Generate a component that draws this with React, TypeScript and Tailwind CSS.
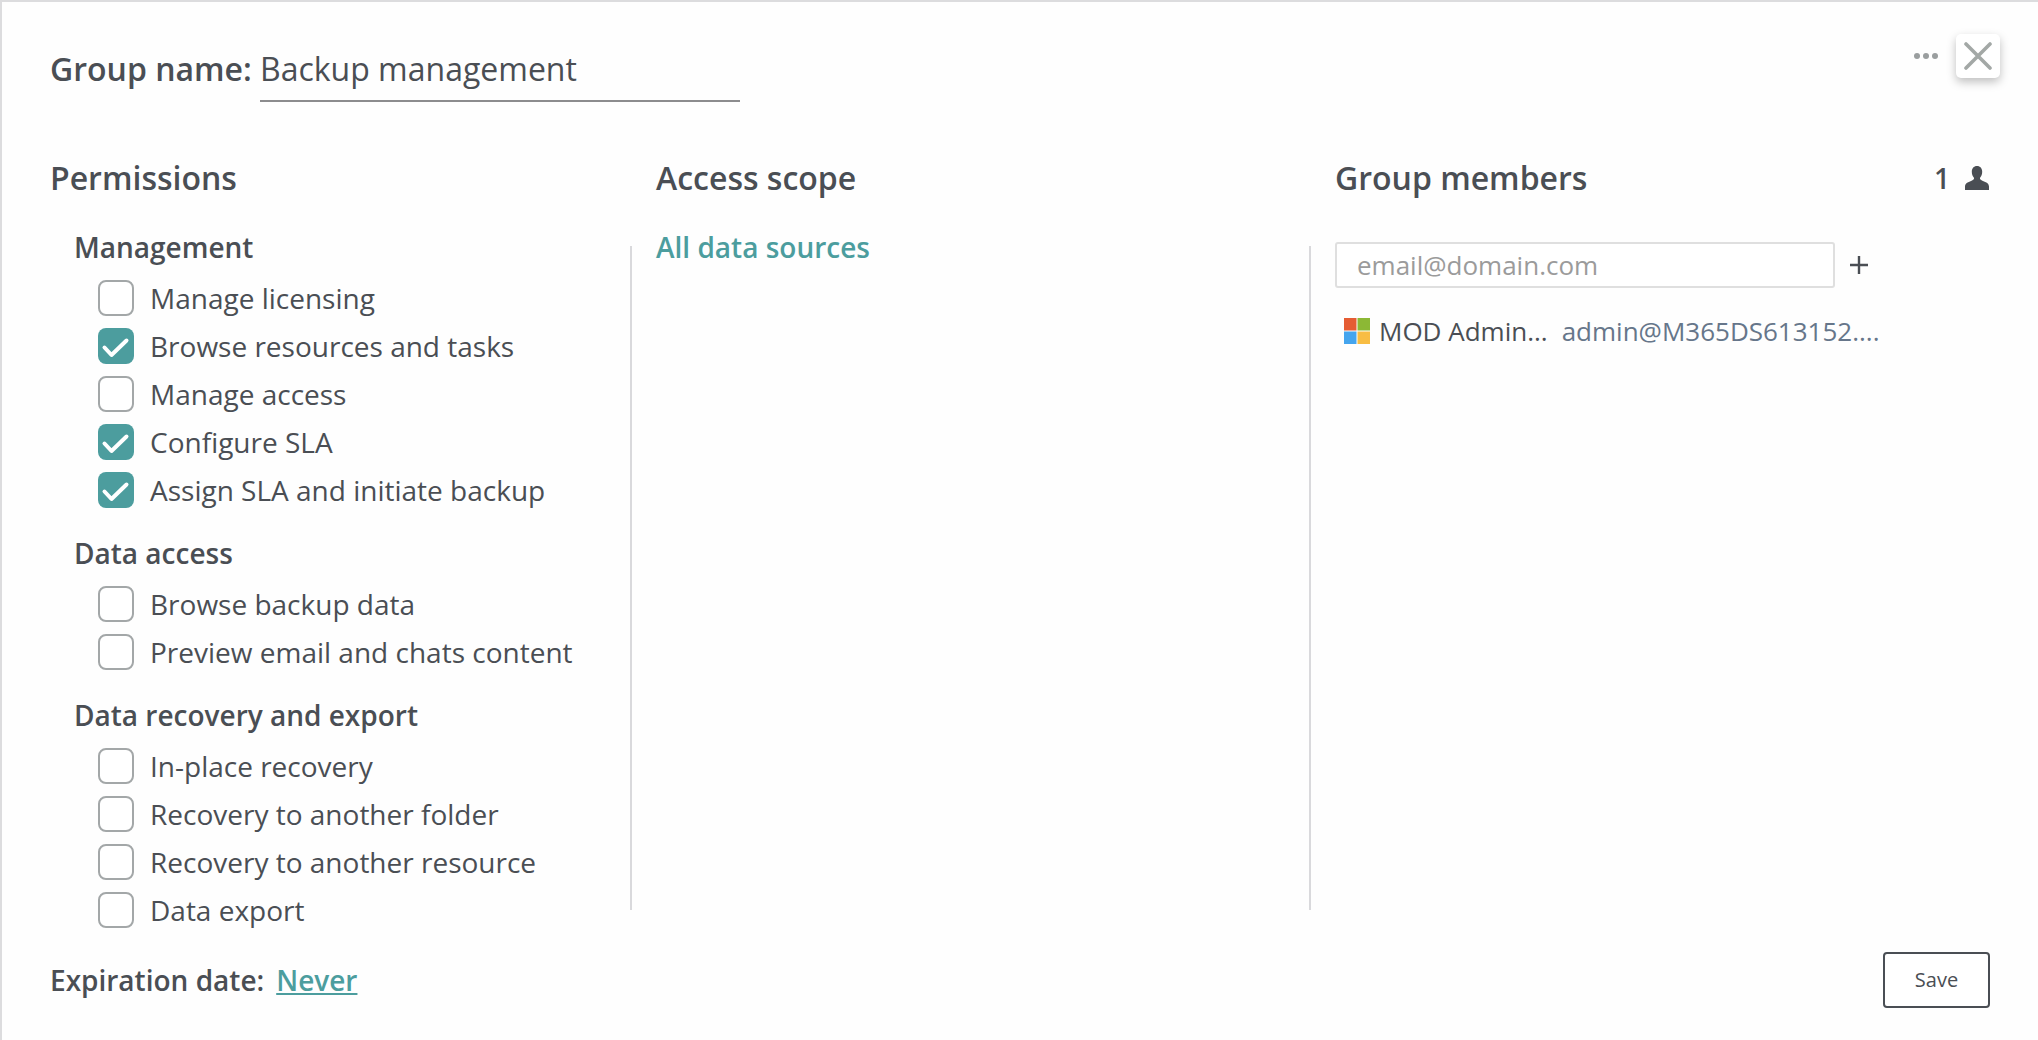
import React from "react";

function Box({ on }: { on?: boolean }) {
  return on ? (
    <span className="flex h-[36px] w-[36px] shrink-0 items-center justify-center rounded-[8px] bg-[#4c9d9e]">
      <svg width="36" height="36" viewBox="0 0 36 36" fill="none">
        <path d="M6.5 19.5 L13.5 27 L28.5 12.5" stroke="#fff" strokeWidth="4" strokeLinecap="round" strokeLinejoin="round" />
      </svg>
    </span>
  ) : (
    <span className="block h-[36px] w-[36px] shrink-0 rounded-[8px] border-2 border-[#a3a7a8] bg-white" />
  );
}

function Row({ label, on }: { label: string; on?: boolean }) {
  return (
    <div className="flex h-[48px] items-center gap-[16px] pl-[24px]">
      <Box on={on} />
      <span className="text-[28px] leading-[48px] text-[#4a4e54]">{label}</span>
    </div>
  );
}

function Group({ title, rows, first }: { title: string; rows: [string, boolean?][]; first?: boolean }) {
  return (
    <div className={first ? "pl-[24px]" : "mt-[22px] pl-[24px]"}>
      <div className="mb-[8px] h-[36px] text-[28px] font-semibold leading-[34px] text-[#4a4e54]">{title}</div>
      {rows.map(([l, o]) => (
        <Row key={l} label={l} on={o} />
      ))}
    </div>
  );
}

export default function App() {
  return (
    <div className="flex h-[1040px] w-[2038px] flex-col overflow-hidden border-l-2 border-t-2 border-[#dcdcde] bg-[#fefefe] font-['Open_Sans',sans-serif] text-[#4a4e54]">
      <header className="flex h-[100px] shrink-0 items-start justify-between pl-[48px] pr-[38px]">
        <div className="mt-[47px] flex h-[53px] items-start">
          <span className="w-[210px] text-[32px] font-semibold leading-[40px]">Group name:</span>
          <span className="h-[53px] w-[480px] border-b-2 border-[#8c8c8e] text-[32px] leading-[40px]">Backup management</span>
        </div>
        <div className="mt-[32px] flex items-center gap-[18px]">
          <svg width="24" height="6" viewBox="0 0 24 6" fill="#9a9e9f">
            <circle cx="3" cy="3" r="3" />
            <circle cx="12" cy="3" r="3" />
            <circle cx="21" cy="3" r="3" />
          </svg>
          <button className="flex h-[44px] w-[44px] items-center justify-center rounded-[5px] bg-white shadow-[0_4px_10px_rgba(0,0,0,0.25)]">
            <svg width="28" height="28" viewBox="0 0 28 28" fill="none">
              <path d="M2 2 L26 26 M26 2 L2 26" stroke="#a3a8a6" strokeWidth="3.6" strokeLinecap="round" />
            </svg>
          </button>
        </div>
      </header>

      <div className="mt-[56px] grid grid-cols-[580px_679px_1fr] pl-[48px] pr-[48px]">
        <h2 className="text-[32px] font-semibold leading-[40px]">Permissions</h2>
        <h2 className="pl-[26px] text-[32px] font-semibold leading-[40px]">Access scope</h2>
        <div className="flex items-center justify-between pl-[26px]">
          <h2 className="text-[32px] font-semibold leading-[40px]">Group members</h2>
          <div className="flex items-center gap-[15px]">
            <span className="text-[28px] font-semibold leading-[40px]">1</span>
            <svg width="24" height="24" viewBox="0 0 24 24" fill="#4a4e54" className="mr-[1px]">
              <path d="M12 0c3.2 0 5.2 2.4 5.2 5.7 0 2.4-.8 4.3-1.8 5.6-.6.8-.6 1.6.1 2.2.8.7 1.9 1.2 3.6 1.9 2.6 1 4.9 2.2 4.9 5.2V24H0v-3.4c0-3 2.3-4.2 4.9-5.2 1.7-.7 2.8-1.2 3.6-1.9.7-.6.7-1.4.1-2.2-1-1.3-1.8-3.2-1.8-5.6C6.8 2.4 8.8 0 12 0z" />
            </svg>
          </div>
        </div>
      </div>

      <div className="mt-[32px] grid h-[704px] shrink-0 grid-cols-[580px_679px_1fr] pl-[48px] pr-[48px]">
        <div>
          <Group
            first
            title="Management"
            rows={[
              ["Manage licensing"],
              ["Browse resources and tasks", true],
              ["Manage access"],
              ["Configure SLA", true],
              ["Assign SLA and initiate backup", true],
            ]}
          />
          <Group title="Data access" rows={[["Browse backup data"], ["Preview email and chats content"]]} />
          <Group
            title="Data recovery and export"
            rows={[["In-place recovery"], ["Recovery to another folder"], ["Recovery to another resource"], ["Data export"]]}
          />
        </div>

        <div className="flex items-start gap-[24px]">
          <div className="mt-[16px] h-[664px] w-[2px] shrink-0 bg-[#d9d9dc]" />
          <a className="h-[36px] text-[28px] font-semibold leading-[34px] text-[#4c9d9e]">All data sources</a>
        </div>

        <div className="flex items-start gap-[24px]">
          <div className="mt-[16px] h-[664px] w-[2px] shrink-0 bg-[#d9d9dc]" />
          <div className="flex-1 pt-[12px]">
            <div className="flex items-center gap-[14px]">
              <input
                readOnly
                placeholder="email@domain.com"
                className="h-[46px] w-[500px] rounded-[3px] border-2 border-[#dfdfdf] bg-white px-[20px] text-[26px] outline-none placeholder:text-[#9b9b9b]"
              />
              <svg width="20" height="20" viewBox="0 0 20 20" fill="none">
                <path d="M10 1V19M1 10H19" stroke="#4a4e54" strokeWidth="2.4" />
              </svg>
            </div>
            <div className="mt-[23px] flex items-center pl-[9px]">
              <svg width="26" height="26" viewBox="0 0 26 26">
                <rect x="0" y="0" width="12.5" height="12.5" fill="#e55c33" />
                <rect x="13.5" y="0" width="12.5" height="12.5" fill="#8cb835" />
                <rect x="0" y="13.5" width="12.5" height="12.5" fill="#45a5ee" />
                <rect x="13.5" y="13.5" width="12.5" height="12.5" fill="#f8bd43" />
              </svg>
              <span className="ml-[9px] text-[26px] leading-[40px]">MOD Admin...</span>
              <span className="ml-[14px] text-[26px] leading-[40px] text-[#66768a]">admin@M365DS613152....</span>
            </div>
          </div>
        </div>
      </div>

      <footer className="mt-[18px] flex items-center justify-between pl-[48px] pr-[48px]">
        <div className="flex items-center text-[28px]">
          <span className="font-semibold">Expiration date:</span>
          <a className="ml-[12px] font-semibold text-[#4c9d9e] underline">Never</a>
        </div>
        <button className="h-[56px] w-[107px] rounded-[4px] border-2 border-[#4a4e54] bg-white text-[20px]">Save</button>
      </footer>
    </div>
  );
}
